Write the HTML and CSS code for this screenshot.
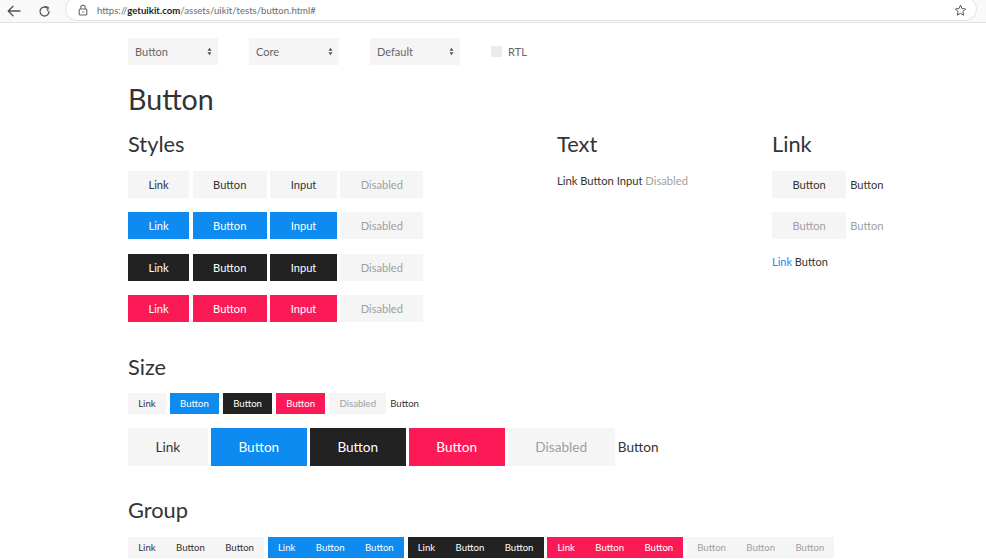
FILE: index.html
```html
<!DOCTYPE html>
<html lang="en">
<head>
<meta charset="utf-8">
<title>Button - UIkit tests</title>
<link rel="stylesheet" href="styles.css">
</head>
<body>
<header class="chrome">
  <span class="nav-icon back">
    <svg width="14" height="12" viewBox="0 0 14 12"><path d="M13 6H1.5M6 1.2L1.2 6L6 10.8" fill="none" stroke="#555" stroke-width="1.3" stroke-linecap="round" stroke-linejoin="round"/></svg>
  </span>
  <span class="nav-icon reload">
    <svg width="13" height="13" viewBox="0 0 13 13"><path d="M11 6.5A4.5 4.5 0 1 1 9.2 2.9" fill="none" stroke="#555" stroke-width="1.3" stroke-linecap="round"/><path d="M7.2 1.6L10.2 2.4L9.6 5.4" fill="none" stroke="#555" stroke-width="1.3" stroke-linecap="round" stroke-linejoin="round"/></svg>
  </span>
  <div class="omnibox">
    <svg class="lock" width="10" height="12" viewBox="0 0 10 12"><path d="M2.8 5V3.4a2.2 2.2 0 0 1 4.4 0V5" fill="none" stroke="#666" stroke-width="1.1"/><rect x="1.2" y="5" width="7.6" height="6" rx="1" fill="none" stroke="#666" stroke-width="1.1"/><circle cx="5" cy="8" r="0.8" fill="#666"/></svg>
    <span class="url"><span class="dim">https://</span><b>getuikit.com</b><span class="dim">/assets/uikit/tests/button.html#</span></span>
    <svg class="star" width="13" height="13" viewBox="0 0 13 13"><path d="M6.5 1.2L8 4.6L11.7 5L8.9 7.5L9.7 11.2L6.5 9.3L3.3 11.2L4.1 7.5L1.3 5L5 4.6Z" fill="none" stroke="#555" stroke-width="1" stroke-linejoin="round"/></svg>
  </div>
</header>

<main class="page">
  <div class="toolbar">
    <div class="select"><span>Button</span><svg width="5" height="9" viewBox="0 0 5 9"><path d="M0.5 3.8L2.5 0.8L4.5 3.8Z M0.5 5.2L2.5 8.2L4.5 5.2Z" fill="#555"/></svg></div>
    <div class="select"><span>Core</span><svg width="5" height="9" viewBox="0 0 5 9"><path d="M0.5 3.8L2.5 0.8L4.5 3.8Z M0.5 5.2L2.5 8.2L4.5 5.2Z" fill="#555"/></svg></div>
    <div class="select"><span>Default</span><svg width="5" height="9" viewBox="0 0 5 9"><path d="M0.5 3.8L2.5 0.8L4.5 3.8Z M0.5 5.2L2.5 8.2L4.5 5.2Z" fill="#555"/></svg></div>
    <label class="check"><span class="box"></span>RTL</label>
  </div>

  <h1 class="title">Button</h1>

  <div class="grid">
    <section>
      <h2 class="heading">Styles</h2>
      <div class="btn-row">
        <a class="btn" href="#">Link</a><button class="btn">Button</button><button class="btn">Input</button><button class="btn" disabled>Disabled</button>
      </div>
      <div class="btn-row">
        <a class="btn btn-primary" href="#">Link</a><button class="btn btn-primary">Button</button><button class="btn btn-primary">Input</button><button class="btn btn-primary" disabled>Disabled</button>
      </div>
      <div class="btn-row">
        <a class="btn btn-secondary" href="#">Link</a><button class="btn btn-secondary">Button</button><button class="btn btn-secondary">Input</button><button class="btn btn-secondary" disabled>Disabled</button>
      </div>
      <div class="btn-row">
        <a class="btn btn-danger" href="#">Link</a><button class="btn btn-danger">Button</button><button class="btn btn-danger">Input</button><button class="btn btn-danger" disabled>Disabled</button>
      </div>
    </section>

    <section>
      <h2 class="heading">Text</h2>
      <p class="text-line"><a class="txt" href="#">Link</a> <span class="txt">Button</span> <span class="txt">Input</span> <span class="txt muted">Disabled</span></p>
    </section>

    <section>
      <h2 class="heading">Link</h2>
      <div class="btn-row link-row">
        <button class="btn">Button</button><button class="btn btn-link">Button</button>
      </div>
      <div class="btn-row link-row">
        <button class="btn" disabled>Button</button><button class="btn btn-link" disabled>Button</button>
      </div>
      <p class="link-line"><a class="blue" href="#">Link</a> <span>Button</span></p>
    </section>
  </div>

  <h2 class="heading size-heading">Size</h2>
  <div class="btn-row sm-row">
    <a class="btn btn-sm" href="#">Link</a><button class="btn btn-sm btn-primary">Button</button><button class="btn btn-sm btn-secondary">Button</button><button class="btn btn-sm btn-danger">Button</button><button class="btn btn-sm" disabled>Disabled</button><button class="btn btn-sm btn-link">Button</button>
  </div>
  <div class="btn-row lg-row">
    <a class="btn btn-lg" href="#">Link</a><button class="btn btn-lg btn-primary">Button</button><button class="btn btn-lg btn-secondary">Button</button><button class="btn btn-lg btn-danger">Button</button><button class="btn btn-lg" disabled>Disabled</button><button class="btn btn-lg btn-link">Button</button>
  </div>

  <h2 class="heading group-heading">Group</h2>
  <div class="groups">
    <div class="group"><a class="btn btn-sm" href="#">Link</a><button class="btn btn-sm">Button</button><button class="btn btn-sm">Button</button></div>
    <div class="group"><a class="btn btn-sm btn-primary" href="#">Link</a><button class="btn btn-sm btn-primary">Button</button><button class="btn btn-sm btn-primary">Button</button></div>
    <div class="group"><a class="btn btn-sm btn-secondary" href="#">Link</a><button class="btn btn-sm btn-secondary">Button</button><button class="btn btn-sm btn-secondary">Button</button></div>
    <div class="group"><a class="btn btn-sm btn-danger" href="#">Link</a><button class="btn btn-sm btn-danger">Button</button><button class="btn btn-sm btn-danger">Button</button></div>
    <div class="group"><button class="btn btn-sm" disabled>Button</button><button class="btn btn-sm" disabled>Button</button><button class="btn btn-sm" disabled>Button</button></div>
  </div>
</main>
</body>
</html>
```

FILE: styles.css
```css
* { box-sizing: border-box; }

html, body {
  margin: 0;
  padding: 0;
  background: #fff;
}

body {
  font-family: Lato, "Open Sans", sans-serif;
  color: #333;
  width: 986px;
  height: 559px;
  overflow: hidden;
}

/* browser chrome */
.chrome {
  height: 23px;
  display: flex;
  align-items: center;
  background: #f9f9f9;
  border-bottom: 1px solid #e3e3e3;
  overflow: hidden;
}

.nav-icon {
  display: flex;
  align-items: center;
}

.back { margin-left: 7px; }
.reload { margin-left: 17px; }

.omnibox {
  margin-left: 14px;
  width: 912px;
  height: 24px;
  margin-top: -4px;
  background: #fff;
  border: 1px solid #e2e2e2;
  border-radius: 12px;
  display: flex;
  align-items: center;
  padding: 2px 9px 0 12px;
}

.lock { flex: none; }

.url {
  margin-left: 9px;
  font-size: 9.6px;
  color: #333;
  flex: 1;
  white-space: nowrap;
}

.url .dim { color: #6b6b6b; }
.url b { font-weight: 700; color: #222; }

.star { flex: none; }

/* page */
.page {
  padding-left: 128px;
}

.toolbar {
  display: flex;
  align-items: center;
  gap: 31px;
  margin-top: 14.5px;
  height: 27px;
}

.select {
  width: 90px;
  height: 27px;
  background: #f5f5f5;
  color: #666;
  font-size: 11px;
  display: flex;
  align-items: center;
  justify-content: space-between;
  padding: 0 6.5px 0 7px;
}

.check {
  display: flex;
  align-items: center;
  gap: 6px;
  font-size: 11px;
  color: #666;
}

.check .box {
  width: 11px;
  height: 11px;
  background: #ebebeb;
}

.title {
  font-size: 28.6px;
  font-weight: 400;
  line-height: 34px;
  margin: 17.7px 0 0;
  color: #333;
}

.heading {
  font-size: 21.8px;
  font-weight: 400;
  line-height: 26px;
  margin: 0 0 14px;
  color: #333;
}

.grid {
  display: grid;
  grid-template-columns: 429px 215px 1fr;
  margin-top: 14.8px;
}

.btn-row {
  display: flex;
  align-items: center;
  gap: 3.4px;
}

.btn-row + .btn-row { margin-top: 14.5px; }

.link-row { gap: 4px; }

.btn {
  font-family: inherit;
  font-size: 11.1px;
  border: 0;
  margin: 0;
  padding: 0 20.5px;
  height: 27px;
  display: inline-flex;
  align-items: center;
  justify-content: center;
  background: #f5f5f5;
  color: #333;
  text-decoration: none;
  white-space: nowrap;
  cursor: pointer;
}

.btn-primary { background: #0d8bf0; color: #fff; }
.btn-secondary { background: #222; color: #fff; }
.btn-danger { background: #fb1a55; color: #fff; }

.btn:disabled {
  background: #f5f5f5;
  color: #a0a0a0;
  cursor: default;
}

.btn-link,
.btn-link:disabled {
  background: none;
  padding: 0;
}

.btn-link { color: #333; }

.btn-sm {
  height: 21px;
  padding: 0 10.2px;
  font-size: 9.6px;
}

.btn-lg {
  height: 38px;
  padding: 0 27.5px;
  font-size: 13.6px;
}

.btn-sm.btn-link, .btn-lg.btn-link { padding: 0; }

.text-line {
  margin: 0;
  font-size: 11.2px;
  line-height: 20px;
}

.txt { color: #333; text-decoration: none; }
.txt.muted { color: #a0a0a0; }

.link-line {
  margin: 14.5px 0 0;
  font-size: 11px;
  line-height: 16.3px;
  color: #333;
}

.blue { color: #1e87f0; text-decoration: none; }

.size-heading {
  margin-top: 32px;
  margin-bottom: 12.6px;
}

.sm-row { gap: 4px; }

.btn-row.lg-row {
  margin-top: 14px;
  gap: 3.2px;
}

.group-heading {
  margin-top: 31.4px;
  margin-bottom: 13.6px;
}

.groups {
  display: flex;
  gap: 3.6px;
}

.group { display: flex; }
```
